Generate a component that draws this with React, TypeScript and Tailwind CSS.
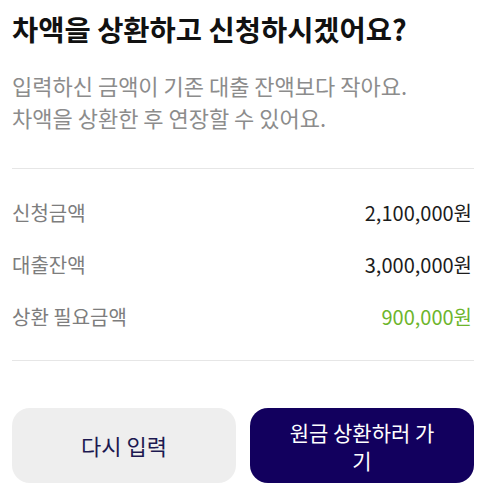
const rows = [
  { label: '신청금액', value: '2,100,000원', highlight: false },
  { label: '대출잔액', value: '3,000,000원', highlight: false },
  { label: '상환 필요금액', value: '900,000원', highlight: true },
]

export default function App() {
  return (
    <div
      className="w-[482px] h-[498px] bg-white pl-3 pr-2 pt-[11px]"
      style={{ fontFamily: '"Noto Sans CJK KR", "Noto Sans", sans-serif' }}
    >
      <h1 className="text-[28.5px] leading-[36px] font-bold text-[#111111]">
        차액을 상환하고 신청하시겠어요?
      </h1>
      <p className="mt-[22px] text-[22px] leading-[32px] text-[#8c8c8c]">
        입력하신 금액이 기존 대출 잔액보다 작아요.
        <br />
        차액을 상환한 후 연장할 수 있어요.
      </p>

      <div className="mt-[35px] h-px bg-[#e6e6e6]" />

      <div className="mt-[18px] flex flex-col">
        {rows.map((row) => (
          <div
            key={row.label}
            className="flex items-center justify-between h-[52px] pr-[2px] text-[20px]"
          >
            <span className="text-[#7d7d7d]">{row.label}</span>
            <span
              className={
                row.highlight ? 'text-[#6db52c]' : 'text-[#1c1c1c]'
              }
            >
              {row.value}
            </span>
          </div>
        ))}
      </div>

      <div className="mt-[17px] h-px bg-[#e6e6e6]" />

      <div className="mt-[47px] grid grid-cols-2 gap-[14px]">
        <button className="h-[75px] rounded-[18px] bg-[#eeeeee] text-[22px] text-[#1c1850]">
          다시 입력
        </button>
        <button className="h-[75px] rounded-[18px] bg-[#12005e] px-[33px] text-[21px] leading-[28px] text-white break-all">
          원금 상환하러 가기
        </button>
      </div>
    </div>
  )
}
